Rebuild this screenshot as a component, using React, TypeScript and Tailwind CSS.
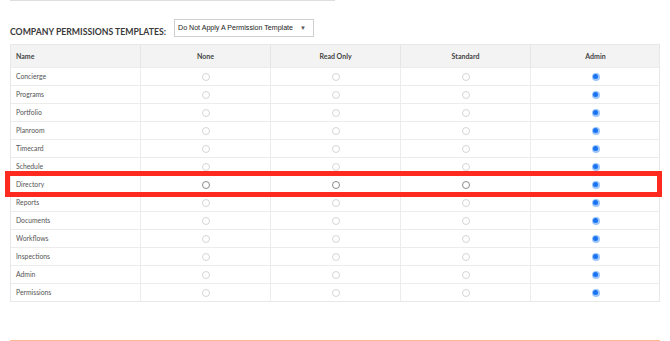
import React from "react";

const rows = [
  "Concierge",
  "Programs",
  "Portfolio",
  "Planroom",
  "Timecard",
  "Schedule",
  "Directory",
  "Reports",
  "Documents",
  "Workflows",
  "Inspections",
  "Admin",
  "Permissions",
];

const cols = ["None", "Read Only", "Standard", "Admin"];

function Radio({ checked, dark }: { checked: boolean; dark?: boolean }) {
  if (checked) {
    return (
      <span className="flex h-[8px] w-[8px] items-center justify-center rounded-full bg-[#9cc6fb]">
        <span className="h-[5px] w-[5px] rounded-full bg-[#1a73f0]" />
      </span>
    );
  }
  return (
    <span
      className={
        dark
          ? "h-[8px] w-[8px] rounded-full border border-[#8a8a8a] bg-white"
          : "h-[8px] w-[8px] rounded-full border border-[#d6d6d6] bg-white"
      }
    />
  );
}

export default function App() {
  return (
    <div
      className="relative h-[341px] w-[670px] overflow-hidden bg-white text-[#555]"
      style={{ fontFamily: "Lato, 'Liberation Sans', sans-serif" }}
    >
      <div className="ml-[10px] h-px w-[325px] bg-[#dedede]" />
      <div className="ml-[10px] mt-[18px] flex items-end gap-[8px]">
        <div className="text-[8.7px] font-bold leading-none text-[#3a3a3a]">
          COMPANY PERMISSIONS TEMPLATES:
        </div>
        <div
          className="flex h-[18px] w-[140px] items-center justify-between border border-[#cfcfcf] bg-white pl-[3px] pr-[7px] text-[7.1px] whitespace-nowrap text-[#222]"
          style={{ fontFamily: "'Liberation Sans', Arial, sans-serif" }}
        >
          <span>Do Not Apply A Permission Template</span>
          <span className="text-[6px] text-[#555]">▼</span>
        </div>
      </div>
      <div className="ml-[10px] mt-[7px] w-[650px] border border-[#e8e8e8]">
        <div className="grid h-[22px] grid-cols-[130px_130px_130px_130px_129px] bg-[#f3f3f3] text-[7px] font-bold text-[#444]">
          <div className="flex items-center border-r border-[#e6e6e6] pl-[5px]">Name</div>
          {cols.map((c, i) => (
            <div
              key={c}
              className={
                "flex items-center justify-center " +
                (i < 3 ? "border-r border-[#e6e6e6]" : "")
              }
            >
              {c}
            </div>
          ))}
        </div>
        {rows.map((r) => (
          <div
            key={r}
            className="grid h-[18px] grid-cols-[130px_130px_130px_130px_129px] border-t border-[#ececec] text-[6.8px] text-[#555]"
          >
            <div className="flex items-center border-r border-[#ececec] pl-[5px]">{r}</div>
            {cols.map((c, i) => (
              <div
                key={c}
                className={
                  "flex items-center justify-center " +
                  (i < 3 ? "border-r border-[#ececec]" : "")
                }
              >
                <Radio checked={i === 3} dark={r === "Directory"} />
              </div>
            ))}
          </div>
        ))}
      </div>
      <div className="absolute left-[10px] top-[340px] h-px w-[650px] bg-[#fbb893]" />
      <div className="absolute left-[5px] top-[171px] h-[26px] w-[657px] border-[5px] border-[#ff2a1f]" />
    </div>
  );
}
